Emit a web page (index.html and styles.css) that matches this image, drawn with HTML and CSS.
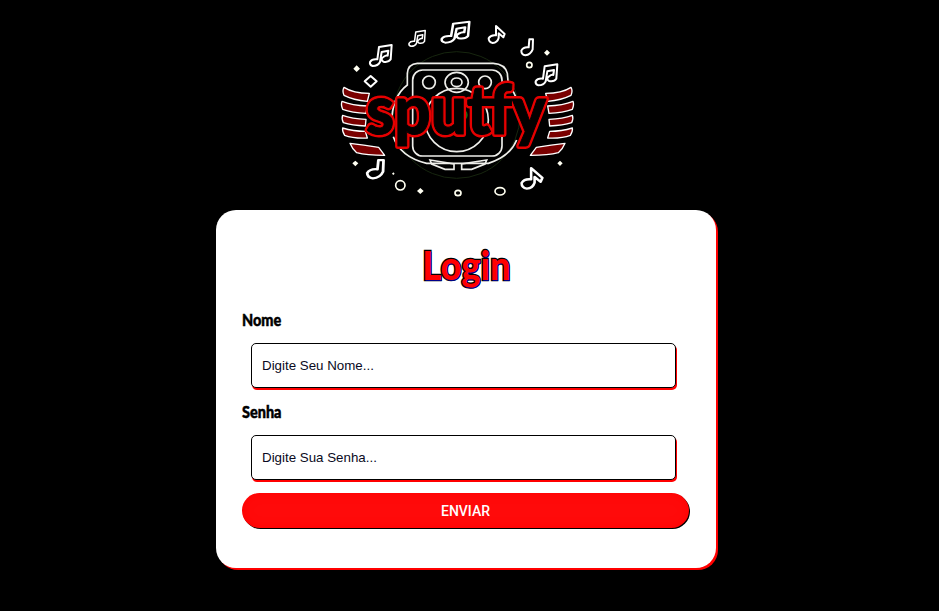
FILE: index.html
```html
<!DOCTYPE html>
<html lang="pt">
<head>
<meta charset="utf-8">
<title>Login - Sputfy</title>
<link rel="stylesheet" href="styles.css">
</head>
<body>
<main class="page">
  <svg class="logo" viewBox="0 0 780 585" width="260" height="195" role="img" aria-label="Sputfy">
    <defs>
      <path id="beam" d="M120 156 Q126 146 142 148 L147 111 L185 105 L182 148 Q176 158 160 155 Q150 148 160 141 Q168 135 173 137 L175 122 L155 126 L150 156 Q144 168 128 168 Q118 165 120 156 Z"/>
      <path id="flag" d="M476 85 Q482 74 498 76 L498 48 L524 72 L520 82 L506 70 L506 84 Q502 98 488 99 Q476 97 476 85 Z"/>
      <path id="solo" d="M574 122 Q580 110 596 112 L598 88 L609 88 L608 118 Q602 134 586 136 Q574 134 574 122 Z"/>
      <g id="wing">
        <path class="feather" d="M42 232 Q70 250 118 250 L112 274 Q70 270 42 256 Q36 242 42 232 Z"/>
        <path class="feather" d="M36 274 Q66 286 112 288 L108 310 Q66 308 38 298 Q32 284 36 274 Z"/>
        <path class="feather" d="M38 316 Q66 326 108 328 L106 348 Q66 346 40 338 Q34 326 38 316 Z"/>
        <path class="feather" d="M38 354 Q70 364 106 364 L112 384 Q70 386 44 376 Q36 364 38 354 Z"/>
        <path class="feather" d="M60 400 Q100 404 146 412 L164 436 Q110 436 80 428 Q66 416 60 400 Z"/>
      </g>
      <text id="brandword" x="108" y="372" textLength="540" lengthAdjust="spacingAndGlyphs">sputfy</text>
    </defs>
    <circle class="ring" cx="380" cy="315" r="190"/>
    <path class="line" d="M185 340 Q185 260 232 225 L232 190 Q234 162 262 160 L490 160 Q525 162 532 190 L535 225 Q575 270 570 340"/>
    <path class="line" d="M190 380 Q210 440 290 460 L475 460 Q540 440 560 390"/>
    <rect class="line" x="248" y="180" width="268" height="258" rx="30"/>
    <circle class="line" cx="297" cy="217" r="19"/>
    <ellipse class="line" cx="380" cy="217" rx="35" ry="30"/>
    <ellipse class="line" cx="380" cy="217" rx="16" ry="13"/>
    <circle class="line" cx="465" cy="217" r="19"/>
    <circle class="line" cx="380" cy="330" r="95"/>
    <circle class="core" cx="395" cy="315" r="18"/>
    <path class="line" d="M300 450 L372 462 L372 478 L345 478 L305 462 Z M470 450 L395 462 L395 478 L425 478 L465 462 Z"/>
    <use class="note" href="#beam"/>
    <use class="note" href="#beam" transform="translate(147 -17) scale(.75)"/>
    <use class="note" href="#beam" transform="translate(183 -70) scale(1.27 1)"/>
    <use class="note" href="#flag"/>
    <use class="note" href="#solo"/>
    <use class="note" href="#beam" transform="translate(497 58)"/>
    <use class="note" href="#solo" transform="translate(-692 349) scale(1.4 1.15)"/>
    <use class="note" href="#flag" transform="translate(-44 417) scale(1.3 1.2)"/>
    <circle class="dot-ring" cx="598" cy="165" r="8"/>
    <circle class="dot-ring" cx="211" cy="526" r="14"/>
    <ellipse class="dot-ring" cx="384" cy="549" rx="9" ry="8"/>
    <ellipse class="dot-ring" cx="510" cy="544" rx="15" ry="11"/>
    <path class="note" d="M122 198 L140 214 L122 230 L104 214 Z"/>
    <path class="spark" d="M80 166 L90 176 L80 186 L70 176 Z M651 119 L660 128 L651 137 L642 128 Z M76 452 L85 460 L76 469 L67 460 Z M690 452 L698 460 L690 468 L682 460 Z M271 534 L281 543 L271 552 L261 543 Z M190 487 L194 491 L190 495 L186 491 Z"/>
    <use href="#wing"/>
    <use href="#wing" transform="translate(765 0) scale(-1 1)"/>
    <use class="brand-edge" href="#brandword"/>
    <use class="brand-body" href="#brandword"/>
  </svg>

  <form class="card">
    <h1 class="title">Login</h1>
    <label class="label" for="nome">Nome</label>
    <input class="field" id="nome" type="text" placeholder="Digite Seu Nome...">
    <label class="label" for="senha">Senha</label>
    <input class="field" id="senha" type="password" placeholder="Digite Sua Senha...">
    <button class="submit" type="button"><span>ENVIAR</span></button>
  </form>
</main>
</body>
</html>
```

FILE: styles.css
```css
* { box-sizing: border-box; }

html, body { height: 100%; }

body {
  margin: 0;
  background: #000;
  font-family: "Liberation Sans", Arial, sans-serif;
  overflow: hidden;
}

.page {
  display: flex;
  flex-direction: column;
  align-items: center;
  padding: 10px 7px 0 0;
}

.logo {
  display: block;
  margin: 0 12px 5px 0;
}

.ring { fill: none; stroke: #17260f; stroke-width: 3; }
.line { fill: none; stroke: #eeeeea; stroke-width: 5; }
.core { fill: #1f6b12; }
.note { fill: #000; stroke: #fff; stroke-width: 6; stroke-linejoin: round; }
.dot-ring { fill: #000; stroke: #fffff0; stroke-width: 5; }
.spark { fill: #fffff2; }
.feather { fill: #7a0000; stroke: #fff; stroke-width: 4; stroke-linejoin: round; }

#brandword {
  font-family: "Lato", "DejaVu Sans", sans-serif;
  font-weight: 900;
  font-size: 205px;
  stroke-linejoin: round;
}

.brand-edge { fill: #e60000; stroke: #e60000; stroke-width: 18; }
.brand-body { fill: #030000; stroke: #030000; stroke-width: 3; }

.card {
  width: 500px;
  height: 358px;
  background: #fff;
  border-radius: 20px;
  box-shadow: 2px 2px 0 #f00;
  padding: 31px 26px 0;
  display: flex;
  flex-direction: column;
  align-items: flex-start;
}

.title {
  align-self: center;
  margin: 0 0 21px;
  font-family: "Lato", sans-serif;
  font-size: 39px;
  line-height: 48px;
  font-weight: 900;
  color: #f00;
  -webkit-text-stroke: 2.5px #000;
  paint-order: stroke fill;
  text-shadow: 1px 1px 0 #00008a;
  transform: scaleX(.93);
}

.label {
  display: block;
  height: 20px;
  font-family: "Lato", sans-serif;
  font-size: 17px;
  line-height: 20px;
  font-weight: 900;
  color: #000;
  -webkit-text-stroke: .5px #000;
  transform: scaleX(.85);
  transform-origin: left center;
}

.field {
  display: block;
  width: 425px;
  height: 45px;
  margin: 13px 0 14px 9px;
  padding: 0 10px;
  border: 1px solid #000;
  border-radius: 5px;
  background: #fff;
  box-shadow: 1px 2px 0 #f00;
  font: 13.33px "Liberation Sans", Arial, sans-serif;
  outline: none;
}

.field::placeholder { color: #0a0a22; opacity: 1; }

.submit {
  width: 447px;
  height: 35px;
  margin-top: -1px;
  border: 0;
  border-radius: 18px;
  background: #f00;
  background-image: linear-gradient(#ff0a0a, #ff0a0a);
  box-shadow: inset 0 0 10px #f00, 1px 1px 0 #000;
  color: #fff;
  font: 500 14px "Roboto", "Liberation Sans", sans-serif;
  padding: 0;
}
```
